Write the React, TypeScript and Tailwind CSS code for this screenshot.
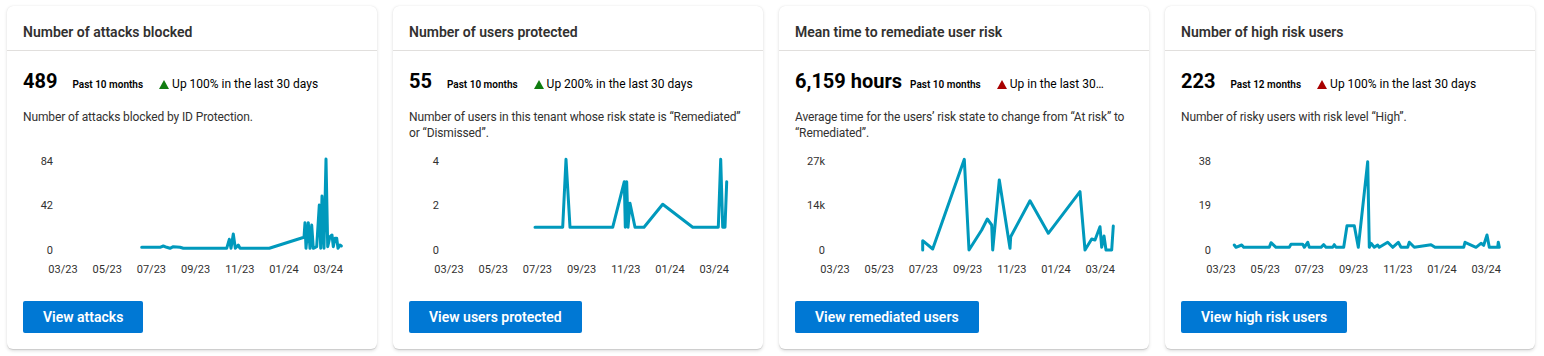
import React from "react";

type Card = {
  title: string;
  value: string;
  period: string;
  trend: string;
  good: boolean;
  desc: string;
  yLabels: [string, string, string];
  points: number[][];
  button: string;
  gap: string;
  truncate?: boolean;
};

const months = ["03/23", "05/23", "07/23", "09/23", "11/23", "01/24", "03/24"];

const cards: Card[] = [
  {
    title: "Number of attacks blocked",
    value: "489",
    period: "Past 10 months",
    trend: "Up 100% in the last 30 days",
    good: true,
    desc: "Number of attacks blocked by ID Protection.",
    yLabels: ["84", "42", "0"],
    button: "View attacks",
    gap: "ml-[15px]",
    points: [
      [118.7, 97.3], [137, 97.3], [140.3, 96], [143.7, 97.3], [147, 98.3], [150.3, 96.7],
      [157, 97.3], [160.3, 98.3], [203.7, 98.3], [206.3, 89.3], [208, 98.3], [210.3, 84],
      [212.3, 98.3], [215.3, 95], [217, 98.3], [246.3, 98.3], [281, 87.3], [282, 72.7],
      [283, 98.3], [285.3, 72.7], [287, 98.3], [288.7, 75], [290.3, 98.3], [293.7, 96.7],
      [296.3, 55], [297.7, 98.3], [299, 46], [301, 98.3], [303, 9], [304.7, 96.7],
      [307, 86.7], [309, 85], [310.3, 96.7], [312, 88.3], [313.7, 88.3], [315, 98.3],
      [317, 95], [318.3, 96],
    ],
  },
  {
    title: "Number of users protected",
    value: "55",
    period: "Past 10 months",
    trend: "Up 200% in the last 30 days",
    good: true,
    desc: "Number of users in this tenant whose risk state is \u201cRemediated\u201d or \u201cDismissed\u201d.",
    yLabels: ["4", "2", "0"],
    button: "View users protected",
    gap: "ml-[15px]",
    points: [
      [126, 77.3], [153.7, 77.3], [157, 9.3], [161, 77.3], [203.7, 77.3], [215.3, 31.7],
      [216.3, 77.3], [217.7, 31.7], [219, 77.3], [221, 53.3], [226, 77.3], [235, 77.3],
      [253.7, 54.3], [283.7, 77.3], [309.3, 77.3], [311.7, 9.3], [313.7, 77.3], [316, 77.3],
      [317.7, 31.7],
    ],
  },
  {
    title: "Mean time to remediate user risk",
    value: "6,159 hours",
    period: "Past 10 months",
    trend: "Up in the last 30 days",
    good: false,
    truncate: true,
    desc: "Average time for the users\u2019 risk state to change from \u201cAt risk\u201d to \u201cRemediated\u201d.",
    yLabels: ["27k", "14k", "0"],
    button: "View remediated users",
    gap: "ml-[8px]",
    points: [
      [127.7, 100], [127.7, 90.7], [137.7, 99], [169.3, 9.3], [174, 100], [186.7, 80],
      [192.3, 69], [196.7, 75], [197.7, 100], [204.3, 30], [215, 98.3], [215.7, 86.7],
      [235, 50.7], [253.3, 83.3], [285, 41.7], [290, 100], [296.7, 89], [300, 90],
      [305, 76.7], [306.7, 97.3], [309, 86], [311, 100], [316.7, 100], [318.3, 76],
    ],
  },
  {
    title: "Number of high risk users",
    value: "223",
    period: "Past 12 months",
    trend: "Up 100% in the last 30 days",
    good: false,
    desc: "Number of risky users with risk level \u201cHigh\u201d.",
    yLabels: ["38", "19", "0"],
    button: "View high risk users",
    gap: "ml-[15px]",
    points: [
      [53.3, 95], [55, 97.3], [60.7, 95], [62.7, 97.3], [88.3, 97.3], [90, 92.7], [95, 97.3],
      [108.3, 97.3], [110, 94.3], [121.7, 94.3], [123.3, 97.3], [126.7, 92.3], [128.3, 97.3],
      [140, 97.3], [142.7, 94.7], [145, 97.3], [151.7, 97.3], [153.3, 94.7], [155, 97.3],
      [162.7, 97.3], [166, 75.7], [173.3, 75.7], [177.3, 97.3], [186.7, 11.7], [188.3, 97.3],
      [190, 93.3], [193.3, 97.3], [196.7, 95], [198.3, 97.3], [206.7, 92.3], [211.7, 97.3],
      [217.3, 92.3], [220, 97.3], [226.7, 97.3], [228.3, 92.3], [233.3, 97.3], [250, 94.7],
      [254, 97.3], [282.7, 97.3], [284, 92.3], [295, 97.3], [300, 93.3], [302.7, 95.3],
      [306, 85], [308.3, 97.3], [316.7, 97.3], [317.3, 92.3], [318.3, 97.3],
    ],
  },
];

const family = "'Segoe UI',Roboto,'Noto Sans',sans-serif";
const font = "font-['Segoe_UI',Roboto,'Noto_Sans',sans-serif]";

function Triangle({ good }: { good: boolean }) {
  return (
    <svg width="10" height="9" viewBox="0 0 10 9" className="mr-[3px] shrink-0 self-center">
      <path d="M5 0L10 9H0z" fill={good ? "#107c10" : "#a80000"} />
    </svg>
  );
}

function Chart({ card }: { card: Card }) {
  const ys = [11, 55, 100];
  return (
    <svg width="338" height="132" viewBox="0 0 338 132" className="mt-[9px] block">
      {card.yLabels.map((l, i) => (
        <text key={l} x="30" y={ys[i] + 4} textAnchor="end" fontSize="11" fill="#323130" fontFamily={family}>
          {l}
        </text>
      ))}
      {months.map((m, i) => (
        <text
          key={m}
          x={40 + i * 44.2}
          y="123"
          textAnchor="middle"
          fontSize="11"
          fill="#323130"
          fontFamily={family}
        >
          {m}
        </text>
      ))}
      <polyline
        points={card.points.map((p) => p.join(",")).join(" ")}
        fill="none"
        stroke="#0099bc"
        strokeWidth="3"
        strokeLinejoin="round"
        strokeLinecap="round"
      />
    </svg>
  );
}

function StatCard({ card }: { card: Card }) {
  return (
    <div className="flex w-[370px] flex-col rounded-md bg-white shadow-[0_1.6px_3.6px_rgba(0,0,0,0.13),0_0.3px_0.9px_rgba(0,0,0,0.11)]">
      <div className="border-b border-[#e1dfdd] px-4 pt-4 pb-2 text-[14px] leading-5 font-semibold text-[#323130]">
        {card.title}
      </div>
      <div className="flex flex-col px-4 pt-4 pb-4">
        <div className="flex h-7 items-baseline whitespace-nowrap">
          <span className="text-[20px] leading-7 font-bold text-black">{card.value}</span>
          <span className={`${card.gap} text-[10px] font-semibold text-black`}>{card.period}</span>
          <span className="ml-4 flex items-baseline text-[12px] text-black">
            <Triangle good={card.good} />
            {card.truncate ? (
              <span className="w-[94px] truncate" title={card.trend}>
                {card.trend}
              </span>
            ) : (
              <span>{card.trend}</span>
            )}
          </span>
        </div>
        <p className="mt-[14px] h-8 text-[12px] leading-4 tracking-[-0.12px] text-[#323130]">{card.desc}</p>
        <Chart card={card} />
        <div className="mt-[19px]">
          <button className="h-8 rounded-[2px] bg-[#0078d4] px-5 text-[14px] font-semibold text-white">
            {card.button}
          </button>
        </div>
      </div>
    </div>
  );
}

export default function App() {
  return (
    <div className={`${font} h-[356px] w-[1544px] bg-white`}>
      <div className="flex gap-4 pt-[6px] pl-[7px]">
        {cards.map((c) => (
          <StatCard key={c.title} card={c} />
        ))}
      </div>
    </div>
  );
}
